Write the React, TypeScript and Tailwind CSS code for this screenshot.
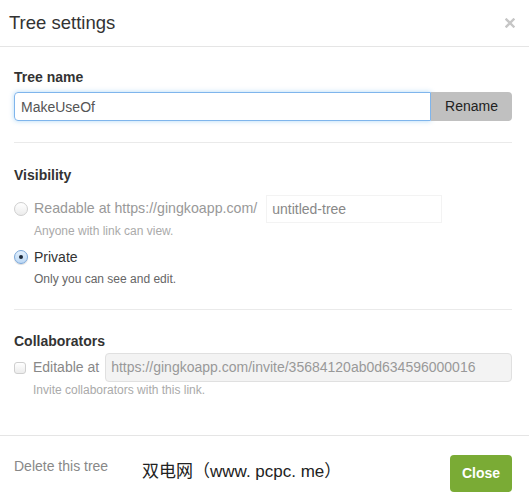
import React from 'react';

function Radio({ checked }: { checked?: boolean }) {
  return (
    <span
      className={
        'flex h-[14px] w-[14px] shrink-0 items-center justify-center rounded-full border ' +
        (checked
          ? 'border-[#7aa7d9] bg-gradient-to-b from-[#e3f0fc] to-[#bcd8f5] shadow-[0_1px_1px_rgba(0,0,0,0.15)]'
          : 'border-[#cfcfcf] bg-gradient-to-b from-white to-[#ececec]')
      }
    >
      {checked && <span className="h-[4px] w-[4px] rounded-full bg-[#1d2a3a]" />}
    </span>
  );
}

export default function App() {
  return (
    <div className="relative h-[499px] w-[529px] overflow-hidden bg-white font-['Liberation_Sans',Arial,sans-serif] text-[#333]">
      <header className="flex h-[47px] items-center justify-between border-b border-[#e5e5e5] pl-[9px] pr-[14px]">
        <h1 className="text-[18.5px] leading-none text-[#333]">Tree settings</h1>
        <svg width="10" height="10" viewBox="0 0 10 10" className="mr-[0px]">
          <path d="M1.5 1.5 L8.5 8.5 M8.5 1.5 L1.5 8.5" stroke="#c6c6c6" strokeWidth="2.4" strokeLinecap="square" />
        </svg>
      </header>

      <main className="pl-[14px] pr-[17px] pt-[21px]">
        <section>
          <div className="text-[14px] font-bold leading-[18px]">Tree name</div>
          <div className="mt-[6px] flex h-[29px]">
            <input
              readOnly
              value="MakeUseOf"
              className="h-full flex-1 rounded-l-[4px] border border-[#7fb5ec] px-[6px] text-[14px] text-[#555] shadow-[0_0_5px_rgba(82,168,236,0.45)] outline-none"
            />
            <button className="h-full w-[81px] rounded-r-[4px] bg-[#c0c0c0] text-[14px] text-[#222]">Rename</button>
          </div>
        </section>

        <hr className="mt-[21px] border-[#eaeaea]" />

        <section className="pt-[23px]">
          <div className="text-[14px] font-bold leading-[18px]">Visibility</div>
          <div className="mt-[11px] flex h-[28px] items-center">
            <Radio />
            <span className="ml-[6px] text-[14.2px] text-[#999]">Readable at https://gingkoapp.com/</span>
            <span className="ml-[9px] flex h-full w-[176px] items-center border border-[#f3f3f3] px-[5px] text-[14px] text-[#888]">
              untitled-tree
            </span>
          </div>
          <div className="ml-[20px] text-[12px] leading-[17px] text-[#aaa]">Anyone with link can view.</div>
          <div className="mt-[7px] flex h-[20px] items-center">
            <Radio checked />
            <span className="ml-[6px] text-[14px] text-[#333]">Private</span>
          </div>
          <div className="ml-[20px] mt-[4px] text-[12px] leading-[17px] text-[#666]">Only you can see and edit.</div>
        </section>

        <hr className="mt-[21px] border-[#eaeaea]" />

        <section className="pt-[22px]">
          <div className="text-[14px] font-bold leading-[18px]">Collaborators</div>
          <div className="mt-[3px] flex h-[29px] items-center">
            <span className="h-[12px] w-[12px] shrink-0 rounded-[3px] border border-[#cfcfcf] bg-gradient-to-b from-white to-[#ececec]" />
            <span className="ml-[7px] text-[14px] text-[#888]">Editable at</span>
            <span className="ml-[6px] flex h-full flex-1 items-center rounded-[4px] border border-[#e0e0e0] bg-[#f3f3f3] px-[5px] text-[14px] text-[#999]">
              https://gingkoapp.com/invite/35684120ab0d634596000016
            </span>
          </div>
          <div className="ml-[19px] text-[12px] leading-[17px] text-[#aaa]">Invite collaborators with this link.</div>
        </section>
      </main>

      <footer className="absolute bottom-0 left-0 right-0 flex h-[64px] items-start justify-between border-t border-[#e5e5e5] pl-[14px] pr-[17px]">
        <span className="mt-[20px] text-[14px] text-[#888]">Delete this tree</span>
        <button className="mt-[19px] h-[37px] w-[62px] rounded-[4px] bg-[#7aab35] text-[14px] font-bold text-white">Close</button>
      </footer>

      <div className="absolute left-[142px] top-[463px] text-[17px] leading-none text-[#222] font-['Liberation_Sans','Noto_Sans_CJK_SC',sans-serif]">
        双电网（www. pcpc. me）
      </div>
    </div>
  );
}
